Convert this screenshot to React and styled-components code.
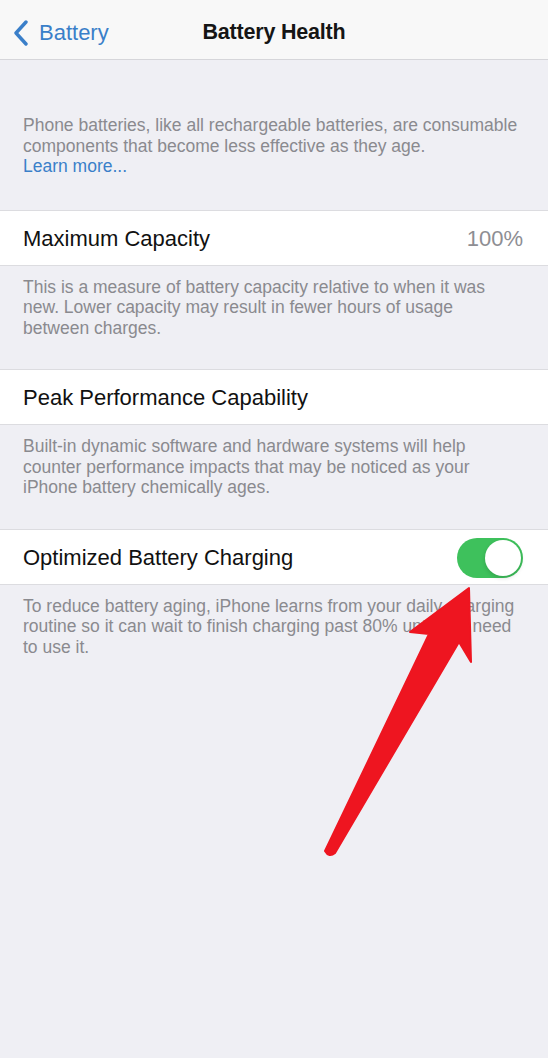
import React from "react";
import styled, { createGlobalStyle } from "styled-components";

const Global = createGlobalStyle`
  html, body {
    margin: 0;
    padding: 0;
    background: #efeff4;
  }
  body {
    font-family: "Liberation Sans", Arial, sans-serif;
    -webkit-font-smoothing: antialiased;
  }
`;

const Page = styled.div`
  position: relative;
  width: 548px;
  min-height: 1058px;
  background: #efeff4;
  overflow: hidden;
`;

const NavBar = styled.header`
  display: grid;
  grid-template-columns: 1fr auto 1fr;
  align-items: center;
  height: 60px;
  padding-top: 6px;
  background: #f8f8f8;
  border-bottom: 1px solid #d6d6da;
  box-sizing: border-box;
`;

const BackLink = styled.a`
  display: flex;
  align-items: center;
  gap: 10px;
  padding-left: 13px;
  color: #3a7fc9;
  font-size: 22px;
  text-decoration: none;
  svg {
    display: block;
  }
`;

const Title = styled.h1`
  margin: 0;
  font-size: 21.5px;
  font-weight: 700;
  color: #151515;
  letter-spacing: -0.2px;
`;

const Footer = styled.p`
  margin: 0;
  padding: ${(p) => (p.$top ? "55px 30px 33px 23px" : "11px 30px 31px 23px")};
  font-size: 17.5px;
  line-height: 20.5px;
  color: #8a8a8f;
`;

const LearnMore = styled.a`
  display: block;
  color: #3a7fc9;
  text-decoration: none;
`;

const Row = styled.div`
  display: flex;
  align-items: center;
  justify-content: space-between;
  height: 56px;
  padding: 2px 25px 0 23px;
  background: #fff;
  border-top: 1px solid #dcdce0;
  border-bottom: 1px solid #dcdce0;
  box-sizing: border-box;
`;

const Label = styled.span`
  font-size: 22px;
  color: #111;
`;

const Value = styled.span`
  font-size: 22px;
  color: #8e8e93;
`;

const Toggle = styled.span`
  display: flex;
  align-items: center;
  justify-content: ${(p) => (p.$on ? "flex-end" : "flex-start")};
  width: 66px;
  height: 40px;
  padding: 2px;
  box-sizing: border-box;
  border-radius: 20px;
  background: ${(p) => (p.$on ? "#3ec15c" : "#e5e5ea")};
`;

const Knob = styled.span`
  width: 36px;
  height: 36px;
  border-radius: 50%;
  background: #fff;
  box-shadow: 0 2px 4px rgba(0, 0, 0, 0.15);
`;

const Arrow = styled.svg`
  position: absolute;
  left: 320px;
  top: 580px;
  pointer-events: none;
`;

const sections = [
  {
    label: "Maximum Capacity",
    value: "100%",
    text: "This is a measure of battery capacity relative to when it was new. Lower capacity may result in fewer hours of usage between charges.",
  },
  {
    label: "Peak Performance Capability",
    text: "Built-in dynamic software and hardware systems will help counter performance impacts that may be noticed as your iPhone battery chemically ages.",
  },
  {
    label: "Optimized Battery Charging",
    toggle: true,
    text: "To reduce battery aging, iPhone learns from your daily charging routine so it can wait to finish charging past 80% until you need to use it.",
  },
];

export default function App() {
  return (
    <Page>
      <Global />
      <NavBar>
        <BackLink href="#">
          <svg width="16" height="26" viewBox="0 0 16 26">
            <path
              d="M13 2 L3 13 L13 24"
              fill="none"
              stroke="#3a7fc9"
              strokeWidth="3.4"
              strokeLinecap="round"
              strokeLinejoin="round"
            />
          </svg>
          Battery
        </BackLink>
        <Title>Battery Health</Title>
        <span />
      </NavBar>

      <Footer $top>
        Phone batteries, like all rechargeable batteries, are consumable
        components that become less effective as they age.
        <LearnMore href="#">Learn more...</LearnMore>
      </Footer>

      {sections.map((s) => (
        <section key={s.label}>
          <Row>
            <Label>{s.label}</Label>
            {s.value && <Value>{s.value}</Value>}
            {s.toggle && (
              <Toggle $on>
                <Knob />
              </Toggle>
            )}
          </Row>
          <Footer>{s.text}</Footer>
        </section>
      ))}

      {/* red annotation arrow drawn over the screenshot */}
      <Arrow width="160" height="290" viewBox="320 580 160 290">
        <path
          d="M469 588 L471 662 L459 642 L335 853 Q329 858 325 851 L429 634 L410 632 Z"
          fill="#ee1520"
          stroke="#ee1520"
          strokeWidth="2"
          strokeLinejoin="round"
        />
      </Arrow>
    </Page>
  );
}
